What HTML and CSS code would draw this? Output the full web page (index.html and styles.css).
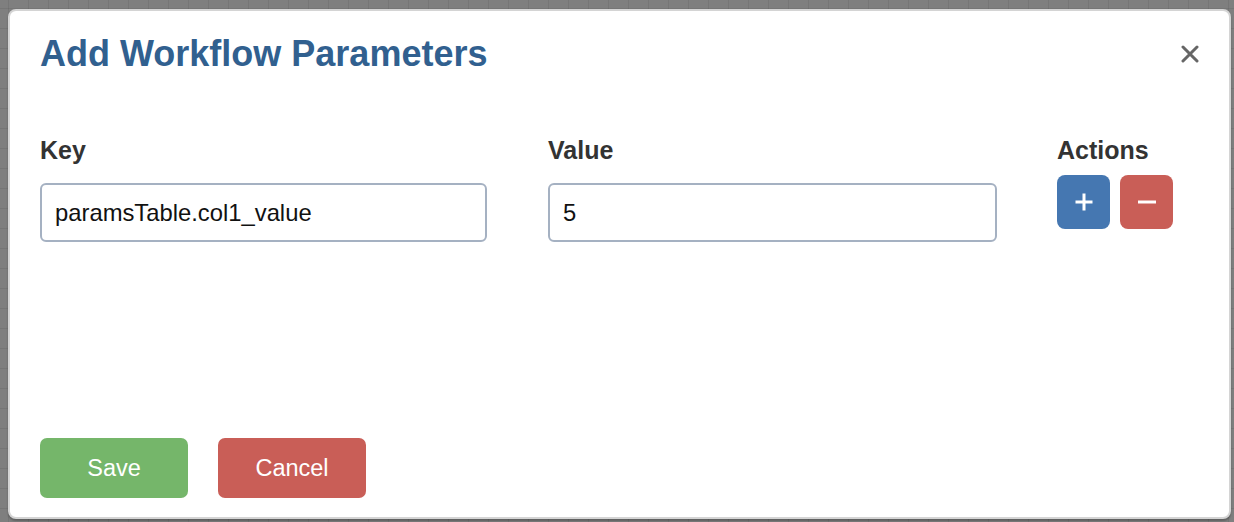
FILE: index.html
```html
<!DOCTYPE html>
<html lang="en">
<head>
<meta charset="utf-8">
<title>Add Workflow Parameters</title>
<link rel="stylesheet" href="styles.css">
</head>
<body>
<div class="modal">
  <div class="modal-header">
    <h1 class="modal-title">Add Workflow Parameters</h1>
    <button class="close" aria-label="Close">
      <svg width="18" height="18" viewBox="0 0 18 18"><path d="M2 2 L16 16 M16 2 L2 16" stroke="#666" stroke-width="3" stroke-linecap="round"/></svg>
    </button>
  </div>
  <div class="modal-body">
    <div class="col">
      <label class="field-label">Key</label>
      <input class="field-input field-key" type="text" value="paramsTable.col1_value">
    </div>
    <div class="col">
      <label class="field-label">Value</label>
      <input class="field-input field-value" type="text" value="5">
    </div>
    <div class="col">
      <label class="field-label">Actions</label>
      <div class="actions">
        <button class="icon-btn btn-add" aria-label="Add">
          <svg width="20" height="20" viewBox="0 0 20 20"><path d="M10 1.5 V18.5 M1.5 10 H18.5" stroke="#fff" stroke-width="3"/></svg>
        </button>
        <button class="icon-btn btn-remove" aria-label="Remove">
          <svg width="20" height="20" viewBox="0 0 20 20"><path d="M1 10 H19" stroke="#fff" stroke-width="3"/></svg>
        </button>
      </div>
    </div>
  </div>
  <div class="modal-footer">
    <button class="btn btn-save">Save</button>
    <button class="btn btn-cancel">Cancel</button>
  </div>
</div>
</body>
</html>
```
FILE: styles.css
```css
html, body {
  margin: 0;
  padding: 0;
}
body {
  width: 1234px;
  height: 522px;
  overflow: hidden;
  background-color: #7f7f7f;
  background-image:
    linear-gradient(to right, rgba(0,0,0,0.07) 1px, transparent 1px),
    linear-gradient(to bottom, rgba(0,0,0,0.07) 1px, transparent 1px);
  background-size: 20px 20px;
  background-position: 8px 8px;
  font-family: "Liberation Sans", Arial, Helvetica, sans-serif;
  display: flow-root;
}
.modal {
  box-sizing: border-box;
  margin: 9px 3px 0 8px;
  height: 510px;
  background: #fff;
  border: 2px solid #d4d4d4;
  border-radius: 8px;
  box-shadow: 0 2px 2px rgba(0,0,0,0.25);
  display: flex;
  flex-direction: column;
  padding: 0 30px 19px 30px;
}
.modal-header {
  display: flex;
  align-items: center;
  justify-content: space-between;
  padding-top: 23px;
}
.modal-title {
  margin: 0;
  font-size: 36px;
  line-height: 40px;
  font-weight: bold;
  color: #31608f;
}
.close {
  border: 0;
  background: none;
  padding: 0;
  margin: 0;
  width: 18px;
  height: 18px;
  display: flex;
}
.modal-body {
  display: grid;
  grid-template-columns: 508px 509px 1fr;
  padding-top: 62px;
}
.col {
  display: flex;
  flex-direction: column;
  align-items: flex-start;
}
.field-label {
  font-size: 25px;
  line-height: 28px;
  font-weight: bold;
  color: #333;
}
.field-input {
  box-sizing: border-box;
  margin-top: 19px;
  height: 59px;
  border: 2px solid #a5b1c2;
  border-radius: 6px;
  padding: 0 13px;
  font-family: "Liberation Sans", Arial, Helvetica, sans-serif;
  font-size: 23.8px;
  color: #111;
  outline: none;
}
.field-key {
  width: 447px;
}
.field-value {
  width: 449px;
}
.actions {
  display: flex;
  gap: 10px;
  margin-top: 11px;
}
.icon-btn {
  width: 53px;
  height: 54px;
  border: 0;
  border-radius: 8px;
  padding: 0;
  display: flex;
  align-items: center;
  justify-content: center;
}
.btn-add {
  background: #4577b1;
}
.btn-remove {
  background: #c95e57;
}
.modal-footer {
  margin-top: auto;
  display: flex;
  gap: 30px;
}
.btn {
  width: 148px;
  height: 60px;
  border: 0;
  border-radius: 7px;
  color: #fff;
  font-family: "Liberation Sans", Arial, Helvetica, sans-serif;
  font-size: 23.5px;
  padding: 0;
}
.btn-save {
  background: #75b66a;
}
.btn-cancel {
  background: #c95e57;
}
```
